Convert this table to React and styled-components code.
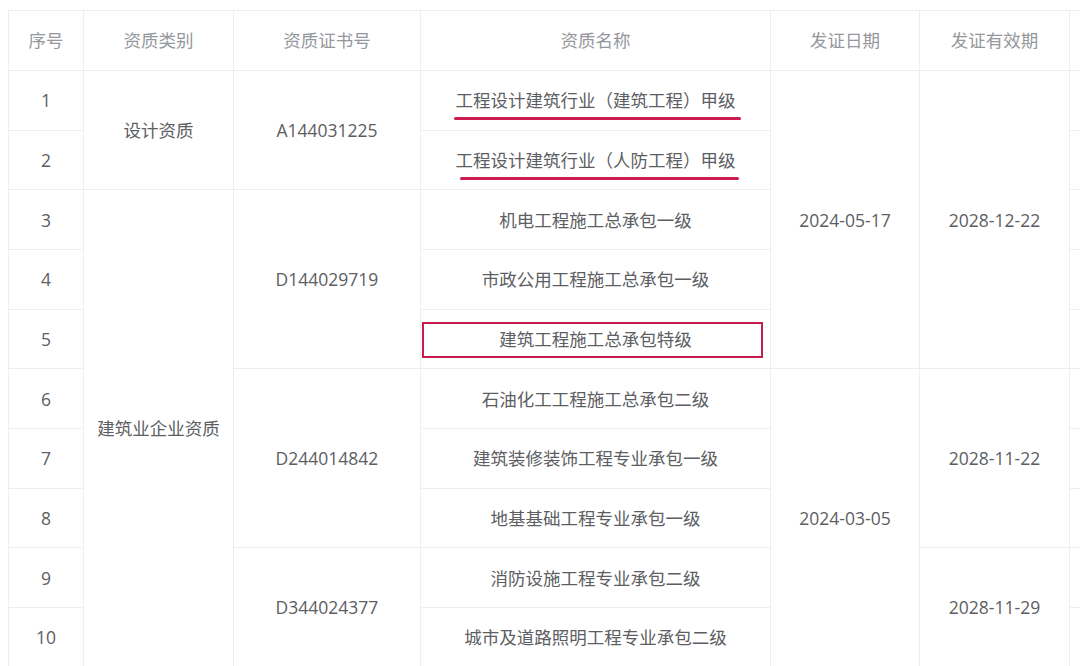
import React from "react";
import styled, { createGlobalStyle } from "styled-components";

const Global = createGlobalStyle`
  body {
    margin: 10px 0 0 8px;
    background: #fff;
    font-family: "Open Sans", "Noto Sans CJK SC", "Microsoft YaHei", sans-serif;
    overflow: hidden;
  }
`;

const Table = styled.table`
  border-collapse: collapse;
  table-layout: fixed;
  width: 1212px;
  font-size: 17.5px;
  line-height: 22px;
  color: #5c5e63;
`;

const Th = styled.th`
  height: 57px;
  border: 1px solid #ebeef2;
  font-weight: normal;
  color: #95979c;
  text-align: center;
  padding: 0 0 2px;
`;

const Td = styled.td`
  height: 58.67px;
  border: 1px solid #ebeef2;
  text-align: center;
  padding: 0;
  position: relative;
`;

const Marked = styled.span`
  position: relative;
  display: inline-block;
  &::after {
    content: "";
    position: absolute;
    left: ${(p) => p.$left}px;
    right: ${(p) => p.$right}px;
    bottom: -9px;
    height: 3px;
    border-radius: 2px;
    background: #cc1d4f;
  }
`;

const Boxed = styled.div`
  position: absolute;
  left: 1px;
  right: 7px;
  top: 12px;
  bottom: 10px;
  border: 2px solid #c61d4d;
`;

const cols = [75, 150, 187, 350, 149, 150, 151];

const rows = [
  { n: 1, type: ["设计资质", 2], cert: ["A144031225", 2], name: "工程设计建筑行业（建筑工程）甲级", mark: [-2, -5], date: ["2024-05-17", 5], valid: ["2028-12-22", 5] },
  { n: 2, name: "工程设计建筑行业（人防工程）甲级", mark: [4, -3] },
  { n: 3, type: ["建筑业企业资质", 8], cert: ["D144029719", 3], name: "机电工程施工总承包一级" },
  { n: 4, name: "市政公用工程施工总承包一级" },
  { n: 5, name: "建筑工程施工总承包特级", box: true },
  { n: 6, cert: ["D244014842", 3], name: "石油化工工程施工总承包二级", date: ["2024-03-05", 5], valid: ["2028-11-22", 3] },
  { n: 7, name: "建筑装修装饰工程专业承包一级" },
  { n: 8, name: "地基基础工程专业承包一级" },
  { n: 9, cert: ["D344024377", 2], name: "消防设施工程专业承包二级", valid: ["2028-11-29", 2] },
  { n: 10, name: "城市及道路照明工程专业承包二级" },
];

const Span = ({ cell }) => (cell ? <Td rowSpan={cell[1]}>{cell[0]}</Td> : null);

export default function App() {
  return (
    <>
      <Global />
      <Table>
        <colgroup>
          {cols.map((w, i) => (
            <col key={i} style={{ width: w }} />
          ))}
        </colgroup>
        <thead>
          <tr>
            <Th>序号</Th>
            <Th>资质类别</Th>
            <Th>资质证书号</Th>
            <Th>资质名称</Th>
            <Th>发证日期</Th>
            <Th>发证有效期</Th>
            <Th></Th>
          </tr>
        </thead>
        <tbody>
          {rows.map((r) => (
            <tr key={r.n}>
              <Td>{r.n}</Td>
              <Span cell={r.type} />
              <Span cell={r.cert} />
              <Td>
                {r.mark ? (
                  <Marked $left={r.mark[0]} $right={r.mark[1]}>
                    {r.name}
                  </Marked>
                ) : (
                  r.name
                )}
                {r.box && <Boxed />}
              </Td>
              <Span cell={r.date} />
              <Span cell={r.valid} />
              <Td></Td>
            </tr>
          ))}
        </tbody>
      </Table>
    </>
  );
}
